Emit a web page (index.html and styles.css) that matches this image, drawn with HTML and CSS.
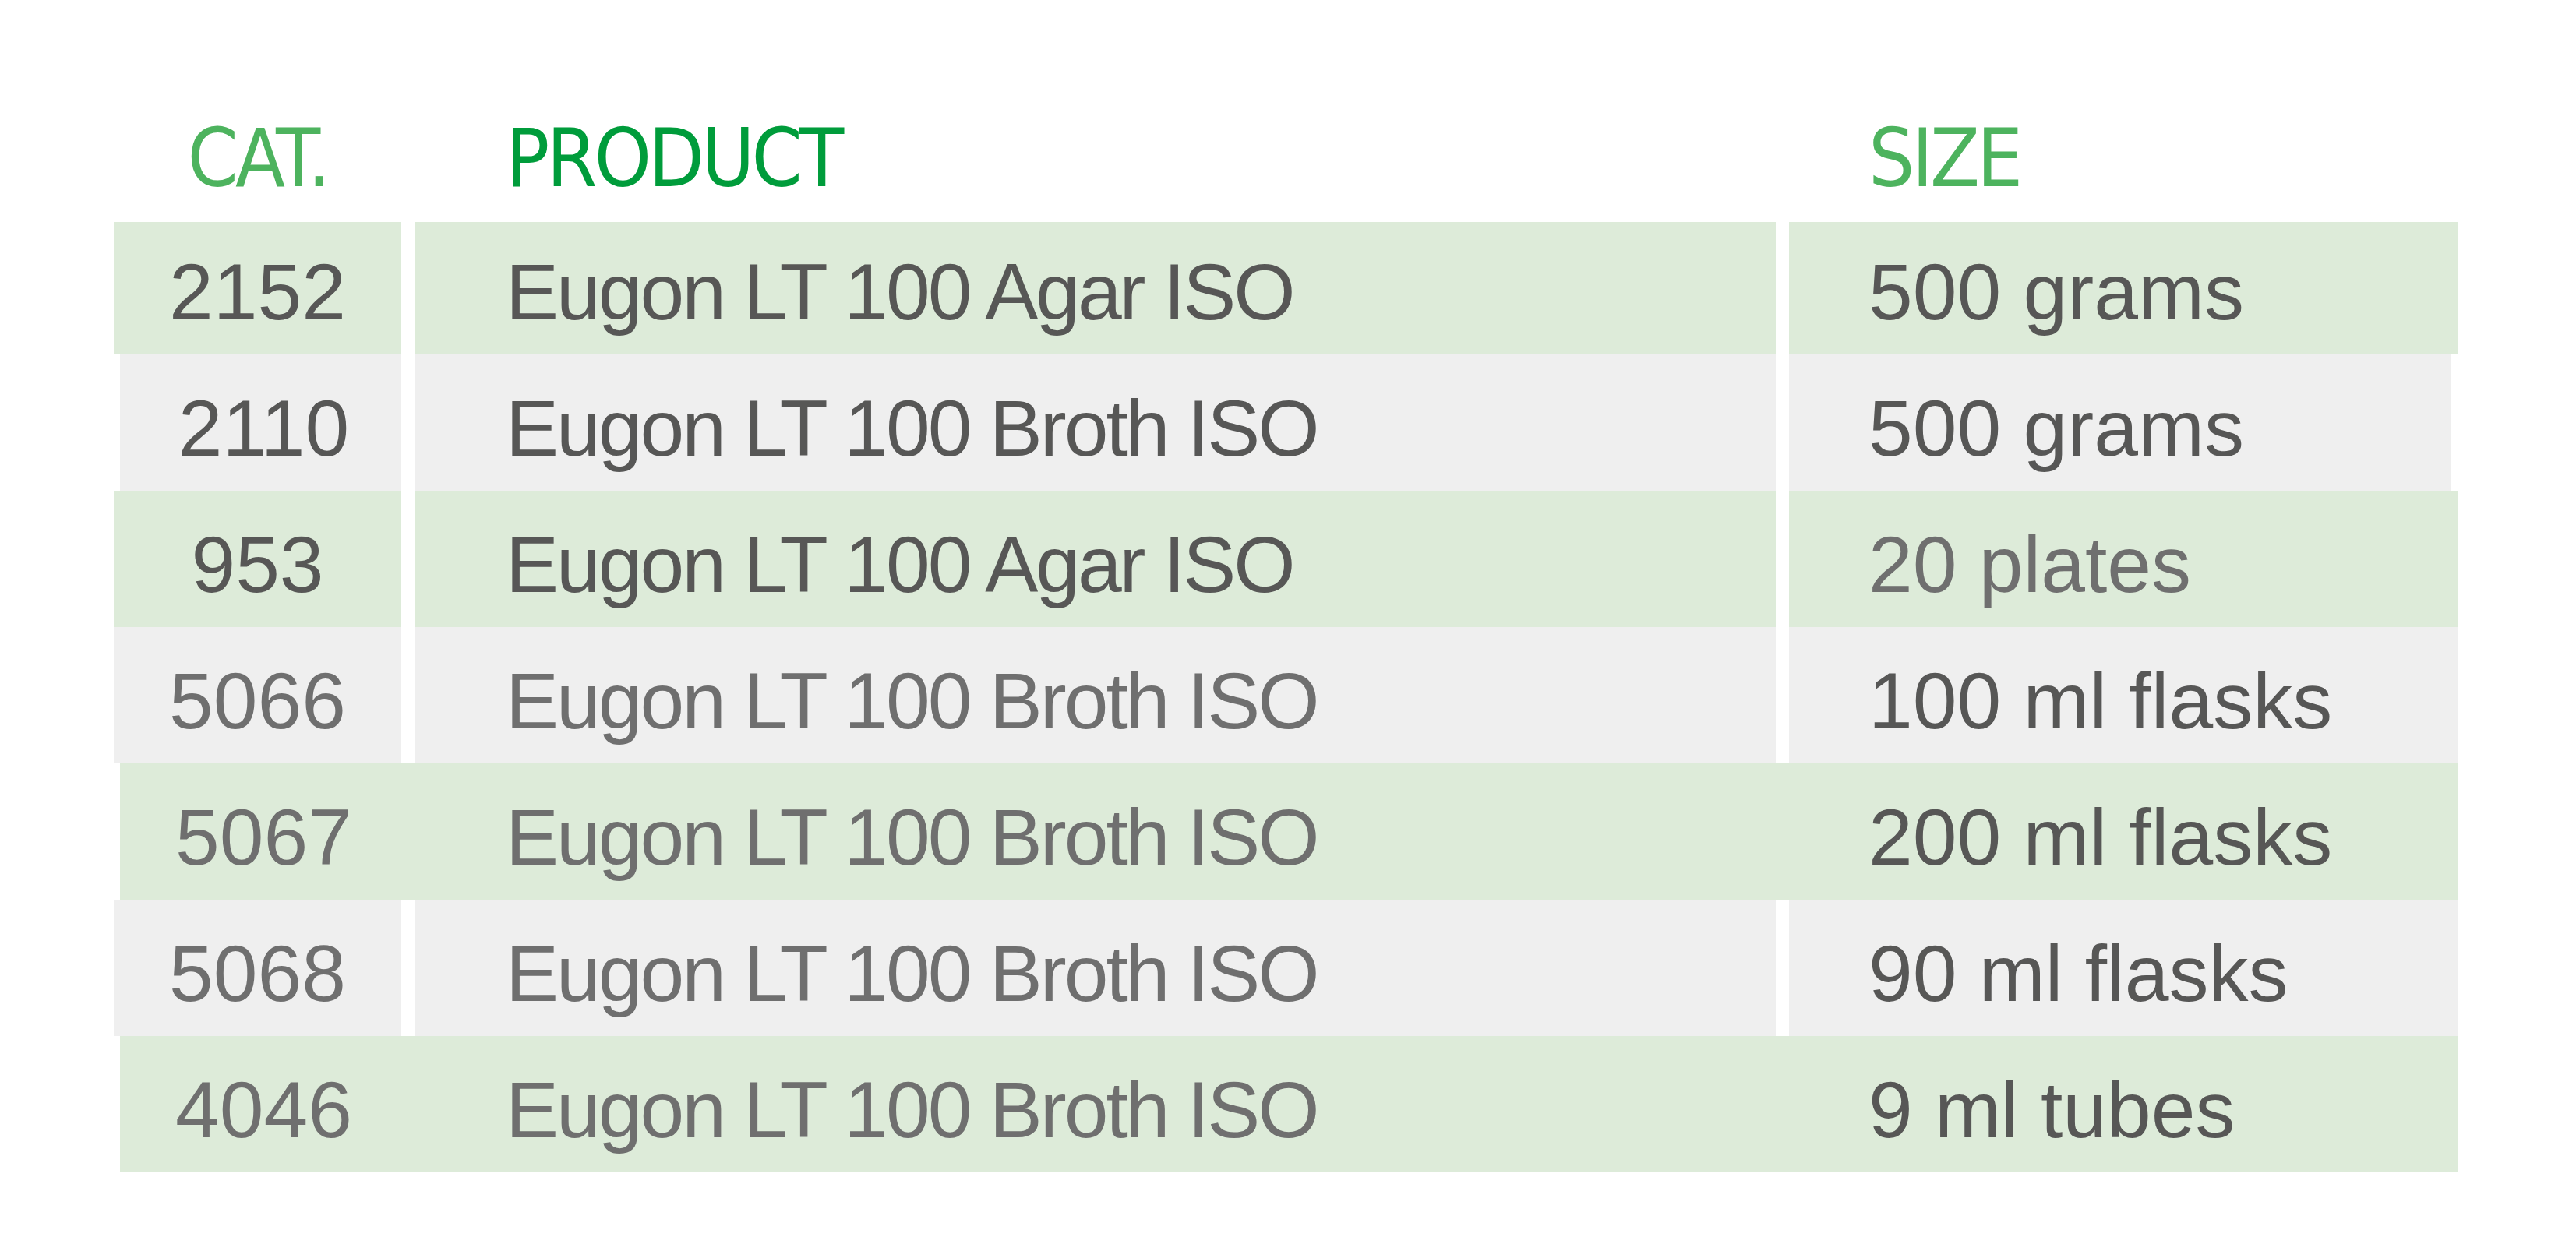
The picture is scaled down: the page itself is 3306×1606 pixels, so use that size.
FILE: index.html
```html
<!DOCTYPE html>
<html lang="en">
<head>
<meta charset="utf-8">
<title>Eugon LT 100 – product table</title>
<link rel="stylesheet" href="styles.css">
</head>
<body>
<div class="table">
  <div class="head">
    <div class="hcell hcat">CAT.</div>
    <div class="hcell hproduct">PRODUCT</div>
    <div class="hcell hsize">SIZE</div>
  </div>

  <div class="row row--first green">
    <div class="cell cat dark">2152</div>
    <div class="cell product dark">Eugon LT 100 Agar ISO</div>
    <div class="cell size dark">500 grams</div>
  </div>
  <div class="row row--shift row--narrow gray">
    <div class="cell cat dark">2110</div>
    <div class="cell product dark">Eugon LT 100 Broth ISO</div>
    <div class="cell size dark">500 grams</div>
  </div>
  <div class="row green">
    <div class="cell cat dark">953</div>
    <div class="cell product dark">Eugon LT 100 Agar ISO</div>
    <div class="cell size light">20 plates</div>
  </div>
  <div class="row gray">
    <div class="cell cat light">5066</div>
    <div class="cell product light">Eugon LT 100 Broth ISO</div>
    <div class="cell size dark">100 ml flasks</div>
  </div>
  <div class="row row--shift row--solid green">
    <div class="cell cat light">5067</div>
    <div class="cell product light">Eugon LT 100 Broth ISO</div>
    <div class="cell size dark">200 ml flasks</div>
  </div>
  <div class="row gray">
    <div class="cell cat light">5068</div>
    <div class="cell product light">Eugon LT 100 Broth ISO</div>
    <div class="cell size dark">90 ml flasks</div>
  </div>
  <div class="row row--shift row--solid green">
    <div class="cell cat light">4046</div>
    <div class="cell product light">Eugon LT 100 Broth ISO</div>
    <div class="cell size dark">9 ml tubes</div>
  </div>
</div>
</body>
</html>
```

FILE: styles.css
```css
html, body {
  margin: 0;
  padding: 0;
  background: #ffffff;
}

body {
  font-family: "Liberation Sans", Arial, sans-serif;
}

.table {
  padding: 151px 0 0 146px;
}

.head {
  display: grid;
  width: max-content;
  grid-template-columns: 369px 1747px 858px;
  column-gap: 17px;
  margin-bottom: 30px;
}

.hcell {
  font-family: "Liberation Sans Narrow", "DejaVu Sans Condensed", "Liberation Sans", sans-serif;
  font-size: 104px;
  line-height: 1;
  height: 104px;
  letter-spacing: -4px;
  white-space: nowrap;
}

.hcat {
  text-align: center;
  color: #4db35e;
}

.hproduct {
  padding-left: 117px;
  color: #009c3b;
}

.hsize {
  padding-left: 102px;
  color: #4db35e;
}

.row {
  display: grid;
  width: max-content;
  grid-template-columns: 369px 1747px 858px;
  column-gap: 17px;
  height: 175px;
}

.row--first {
  height: 170px;
}

.row--shift {
  margin-left: 8px;
  grid-template-columns: 361px 1747px 858px;
}

.row--shift .cat {
  padding-left: 8px;
}

.row--narrow {
  grid-template-columns: 361px 1747px 850px;
}

.cell {
  display: flex;
  align-items: flex-end;
  padding-bottom: 29px;
  font-size: 102px;
  line-height: 1;
  white-space: nowrap;
}

.green .cell {
  background: #ddebd9;
}

.gray .cell {
  background: #efefef;
}

.row--solid.green {
  background: #ddebd9;
}

.cat {
  justify-content: center;
}

.product {
  padding-left: 117px;
  letter-spacing: -3px;
}

.size {
  padding-left: 102px;
}

.dark {
  color: #575756;
}

.light {
  color: #6f6f6f;
}
```
